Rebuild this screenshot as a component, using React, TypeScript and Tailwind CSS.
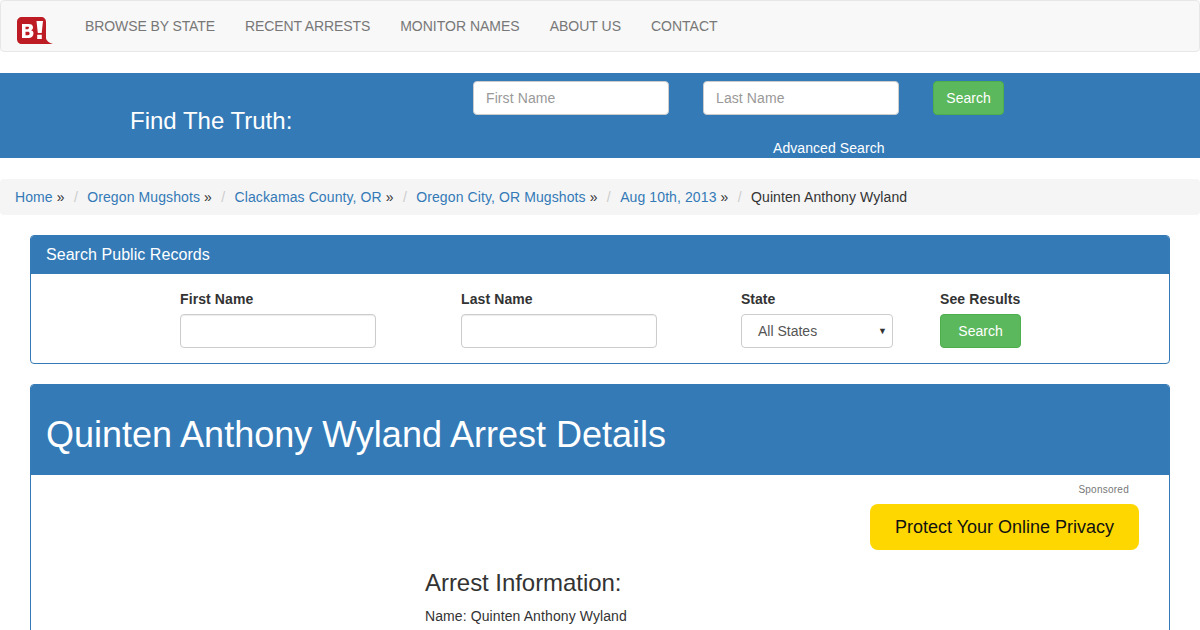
import React from "react";

const navLinks = [
  { label: "BROWSE BY STATE", className: "px-[15px] py-[15px] tracking-[-0.1px] text-[#777]" },
  { label: "RECENT ARRESTS", className: "px-[15px] py-[15px] tracking-[-0.1px] text-[#777]" },
  { label: "MONITOR NAMES", className: "px-[15px] py-[15px] text-[#777]" },
  { label: "ABOUT US", className: "px-[15px] py-[15px] text-[#777]" },
  { label: "CONTACT", className: "px-[15px] py-[15px] text-[#777]" },
];

const crumbs = [
  "Home",
  "Oregon Mugshots",
  "Clackamas County, OR",
  "Oregon City, OR Mugshots",
  "Aug 10th, 2013",
];

const Logo = () => (
  <svg width="38" height="30" viewBox="0 0 38 30" className="block">
    <path
      d="M6 1h19c3 0 5 2 5 5v16c0 2 3 5 7 6H6c-3 0-5-2-5-5V6c0-3 2-5 5-5z"
      fill="#bd1c24"
    />
    <path
      d="M6 8h6.500c3 0 4.500 1.200 4.500 3.400 0 1.400-.7 2.300-1.900 2.800 1.500.4 2.400 1.500 2.400 3.100 0 3-2 4.700-5 4.700H6zM9.500 10.800v2.400h2.200c.9 0 1.400-.4 1.400-1.200s-.5-1.200-1.400-1.200zM9.500 15.800v3.400h2.500c1 0 1.600-.6 1.600-1.700s-.6-1.700-1.600-1.700z"
      fill="#fff"
      fillRule="evenodd"
    />
    <path d="M20.500 5h6.500l-1.300 12h-3.900zM21.200 18.800h4.600V23h-4.600z" fill="#fff" />
  </svg>
);

const Field = ({ className }: { className: string }) => (
  <div className={className}>
    <div className="h-[34px] rounded border border-[#ccc] bg-white shadow-[inset_0_1px_1px_rgba(0,0,0,0.075)]" />
  </div>
);

export default function App() {
  return (
    <div className="h-[630px] overflow-hidden bg-white font-['Liberation_Sans',Arial,sans-serif] text-sm leading-5 text-[#333]">
      <nav className="mb-[21px] flex h-[52px] rounded border border-[#e7e7e7] bg-[#f8f8f8]">
        <div className="pl-[15px] pt-[15px]">
          <Logo />
        </div>
        <ul className="ml-4 flex">
          {navLinks.map((link) => (
            <li key={link.label} className={link.className}>
              {link.label}
            </li>
          ))}
        </ul>
      </nav>

      <section className="flex h-[85px] bg-[#337ab7] text-white">
        <h2 className="ml-[130px] mt-[33px] w-[343px] text-2xl leading-[30px]">Find The Truth:</h2>
        <div className="w-[560px] pt-2">
          <div className="flex">
            <div className="flex h-[34px] w-[196px] items-center rounded border border-[#ccc] bg-white px-3 tracking-[0.1px] text-[#999]">
              First Name
            </div>
            <div className="ml-[34px] flex h-[34px] w-[196px] items-center rounded border border-[#ccc] bg-white px-3 tracking-[0.1px] text-[#999]">
              Last Name
            </div>
            <div className="ml-[34px] flex h-[34px] w-[71px] items-center justify-center rounded border border-[#4cae4c] bg-[#5cb85c]">
              Search
            </div>
          </div>
          <p className="ml-[300px] mt-[23px] tracking-[0.07px]">Advanced Search</p>
        </div>
      </section>

      <ol className="mt-[21px] flex h-9 items-center rounded bg-[#f5f5f5] px-[15px] tracking-[0.1px]">
        {crumbs.map((crumb) => (
          <li key={crumb} className="flex">
            <span className="text-[#337ab7]">{crumb}</span>
            <span className="ml-1">»</span>
            <span className="px-[9.3px] text-[#ccc]">/</span>
          </li>
        ))}
        <li>Quinten Anthony Wyland</li>
      </ol>

      <main className="px-[30px] pt-5">
        <section className="mb-5 h-[129px] rounded border border-[#337ab7]">
          <h3 className="h-[38px] rounded-t-[3px] bg-[#337ab7] px-[15px] py-[10px] text-base leading-[18px] tracking-[0.05px] text-white">
            Search Public Records
          </h3>
          <div className="flex pl-[149px] pt-[15px] font-bold">
            <div className="w-[281px]">
              <p className="mb-[5px] tracking-[0.1px]">First Name</p>
              <Field className="w-[196px]" />
            </div>
            <div className="w-[280px]">
              <p className="mb-[5px] tracking-[0.1px]">Last Name</p>
              <Field className="w-[196px]" />
            </div>
            <div className="w-[199px]">
              <p className="mb-[5px]">State</p>
              <div className="flex h-[34px] w-[152px] items-center justify-between rounded border border-[#ccc] bg-white pl-4 pr-[5px] font-normal text-[#555]">
                <span>All States</span>
                <span className="text-[9px] leading-none text-[#333]">▼</span>
              </div>
            </div>
            <div>
              <p className="mb-[5px] tracking-[0.1px]">See Results</p>
              <div className="flex h-[34px] w-[81px] items-center justify-center rounded border border-[#4cae4c] bg-[#5cb85c] font-normal text-white">
                Search
              </div>
            </div>
          </div>
        </section>

        <section className="h-[400px] rounded border border-[#337ab7]">
          <h1 className="h-[90px] rounded-t-[3px] bg-[#337ab7] px-[15px] pt-[30px] text-4xl leading-10 text-white">
            Quinten Anthony Wyland Arrest Details
          </h1>
          <div className="flex flex-col items-end pr-[30px] pt-[9px]">
            <p className="mr-[10px] text-[10px] leading-3 tracking-[0.25px] text-[#777]">Sponsored</p>
            <div className="mt-[8px] flex h-[46px] w-[269px] items-center justify-center rounded-lg bg-[#ffd700] text-lg text-[#111]">
              Protect Your Online Privacy
            </div>
          </div>
          <div className="pl-[394px] pt-[18px]">
            <h3 className="text-2xl leading-[30px] tracking-[-0.05px]">Arrest Information:</h3>
            <p className="mt-[8px] tracking-[0.1px]">Name: Quinten Anthony Wyland</p>
          </div>
        </section>
      </main>
    </div>
  );
}
